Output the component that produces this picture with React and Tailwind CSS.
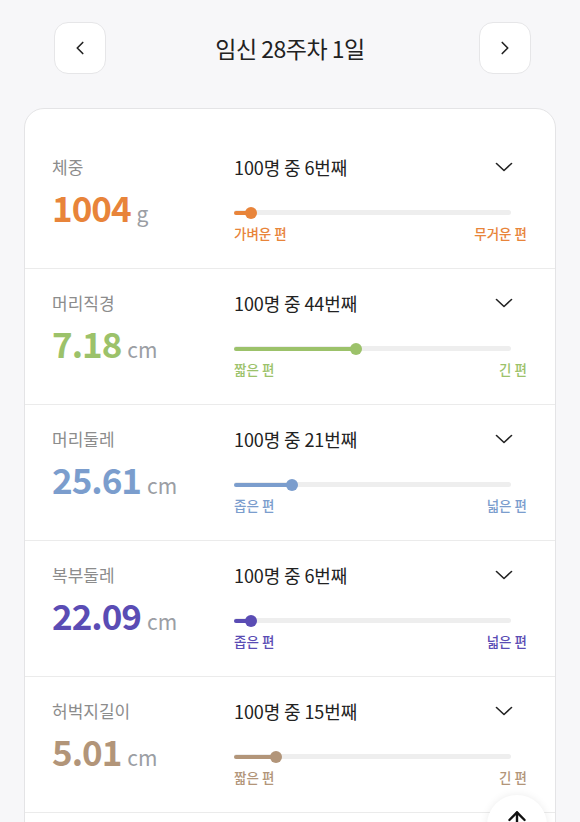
import { ChevronLeft, ChevronRight, ArrowUp } from "lucide-react";

const rows = [
  { label: "체중", value: "1004", unit: "g", rank: 6, low: "가벼운 편", high: "무거운 편", color: "#e8843a" },
  { label: "머리직경", value: "7.18", unit: "cm", rank: 44, low: "짧은 편", high: "긴 편", color: "#9cc26a" },
  { label: "머리둘레", value: "25.61", unit: "cm", rank: 21, low: "좁은 편", high: "넓은 편", color: "#7b9dcd" },
  { label: "복부둘레", value: "22.09", unit: "cm", rank: 6, low: "좁은 편", high: "넓은 편", color: "#5a4cb4" },
  { label: "허벅지길이", value: "5.01", unit: "cm", rank: 15, low: "짧은 편", high: "긴 편", color: "#b29579" },
];

function Chevron() {
  return (
    <svg width="18" height="10" viewBox="0 0 18 10" fill="none" className="text-[#222]">
      <path d="M1.5 1.5 9 8.5l7.5-7" stroke="currentColor" strokeWidth="1.6" strokeLinecap="round" strokeLinejoin="round" />
    </svg>
  );
}

function Row({ row }) {
  return (
    <div className="flex h-[136px] border-b border-[#ebebeb] pl-[27px] pr-[28px] pt-[21px]">
      <div className="w-[182px]">
        <p className="text-[17px] leading-[26px] text-[#8c8c8c]">{row.label}</p>
        <p className="mt-[6px] flex items-baseline leading-[42px]">
          <span className="text-[35px] font-bold tracking-[-1px]" style={{ color: row.color }}>
            {row.value}
          </span>
          <span className="ml-[6px] text-[21px] text-[#9b9ea4]">{row.unit}</span>
        </p>
      </div>
      <div className="flex-1">
        <div className="flex items-center justify-between pr-[14px]">
          <p className="text-[18px] leading-[26px] tracking-[-0.1px] text-[#222]">
            100명 중 {row.rank}번째
          </p>
          <Chevron />
        </div>
        <div className="relative mr-[16px] mt-[30px] h-[5px] rounded-full bg-[#eeeeee]">
          <div
            className="absolute left-0 top-[0.5px] h-[4px] rounded-full"
            style={{ width: `${row.rank}%`, backgroundColor: row.color }}
          />
          <div
            className="absolute top-[-3.5px] h-[12px] w-[12px] -translate-x-1/2 rounded-full"
            style={{ left: `${row.rank}%`, backgroundColor: row.color }}
          />
        </div>
        <div className="mt-[8px] flex justify-between text-[13.5px] font-medium leading-[20px]" style={{ color: row.color }}>
          <span>{row.low}</span>
          <span>{row.high}</span>
        </div>
      </div>
    </div>
  );
}

export default function App() {
  return (
    <div
      className="min-h-[822px] bg-[#f7f7f9] pb-10"
      style={{ fontFamily: '"Noto Sans CJK KR", "Noto Sans", sans-serif' }}
    >
      <div className="flex items-center pl-[54px] pr-[49px] pt-[22px]">
        <button className="flex h-[52px] w-[52px] items-center justify-center rounded-[14px] border border-[#e6e6e8] bg-white">
          <ChevronLeft size={22} strokeWidth={1.8} className="text-[#222]" />
        </button>
        <h1 className="flex-1 pr-[5px] text-center text-[23px] tracking-[-0.5px] text-[#222]">임신 28주차 1일</h1>
        <button className="flex h-[52px] w-[52px] items-center justify-center rounded-[14px] border border-[#e6e6e8] bg-white">
          <ChevronRight size={22} strokeWidth={1.8} className="text-[#222]" />
        </button>
      </div>

      <div className="ml-[24px] mt-[34px] w-[532px] rounded-[20px] border border-[#e4e4e6] bg-white pt-[24px]">
        {rows.map((r) => (
          <Row key={r.label} row={r} />
        ))}
        <div className="h-[120px]" />
      </div>

      <button className="fixed left-[487px] top-[795px] flex h-[60px] w-[60px] items-start justify-center rounded-full bg-white pt-[12px] shadow-[0_0_8px_rgba(0,0,0,0.08)]">
        <ArrowUp size={26} strokeWidth={2.2} className="text-[#111]" />
      </button>
    </div>
  );
}
